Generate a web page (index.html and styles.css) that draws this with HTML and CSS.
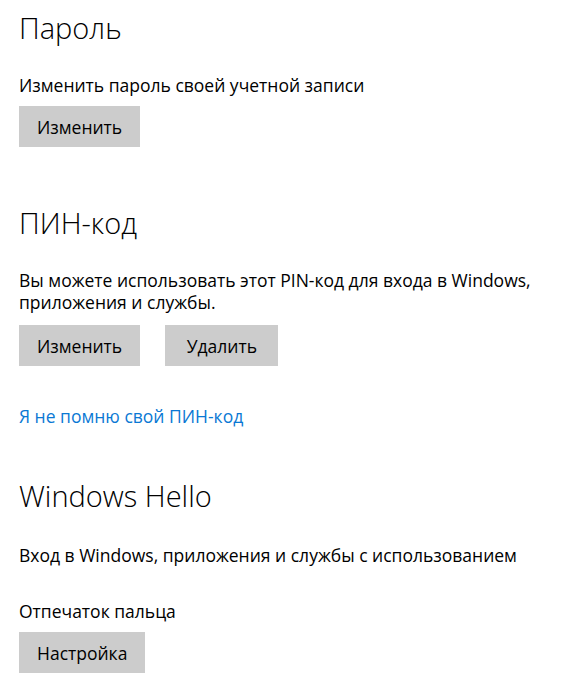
FILE: index.html
```html
<!DOCTYPE html>
<html lang="ru">
<head>
<meta charset="utf-8">
<title>Параметры входа</title>
<link rel="stylesheet" href="styles.css">
</head>
<body>
<main class="page">
  <section class="group group-password">
    <h2 class="title">Пароль</h2>
    <p class="desc">Изменить пароль своей учетной записи</p>
    <div class="actions"><button class="btn">Изменить</button></div>
  </section>

  <section class="group group-pin">
    <h2 class="title">ПИН-код</h2>
    <p class="desc">Вы можете использовать этот PIN-код для входа в Windows, приложения и службы.</p>
    <div class="actions"><button class="btn">Изменить</button><button class="btn btn-wide">Удалить</button></div>
    <a class="link" href="#">Я не помню свой ПИН-код</a>
  </section>

  <section class="group group-hello">
    <h2 class="title">Windows Hello</h2>
    <p class="desc">Вход в Windows, приложения и службы с использованием</p>
    <p class="label">Отпечаток пальца</p>
    <div class="actions"><button class="btn">Настройка</button></div>
  </section>
</main>
</body>
</html>
```

FILE: styles.css
```css
html, body {
  margin: 0;
  padding: 0;
  background: #ffffff;
}

body {
  font-family: "Open Sans", "Noto Sans", sans-serif;
  color: #000000;
}

.page {
  display: flex;
  flex-direction: column;
  padding: 8px 0 0 19px;
  width: 540px;
}

.group {
  display: flex;
  flex-direction: column;
  align-items: flex-start;
}

.title {
  margin: 0;
  font-size: 29px;
  font-weight: 300;
  line-height: 40px;
}

.desc,
.label {
  margin: 0;
  font-size: 17.5px;
  line-height: 22px;
}

.desc {
  margin-top: 26px;
}

.label {
  margin-top: 34px;
}

.actions {
  display: flex;
  gap: 25px;
  margin-top: 10px;
}

.btn {
  height: 41px;
  padding: 0 18px;
  border: none;
  background: #cccccc;
  font-family: inherit;
  font-size: 17.5px;
  color: #000000;
}

.btn-wide {
  padding: 0 21.5px;
}

.link {
  margin-top: 39px;
  font-size: 17.5px;
  line-height: 22px;
  color: #0a78d4;
  text-decoration: none;
}

.group-pin {
  margin-top: 56px;
}

.group-pin .actions {
  margin-top: 12px;
}

.group-hello {
  margin-top: 49px;
}

.group-hello .desc {
  margin-top: 28px;
}
```
